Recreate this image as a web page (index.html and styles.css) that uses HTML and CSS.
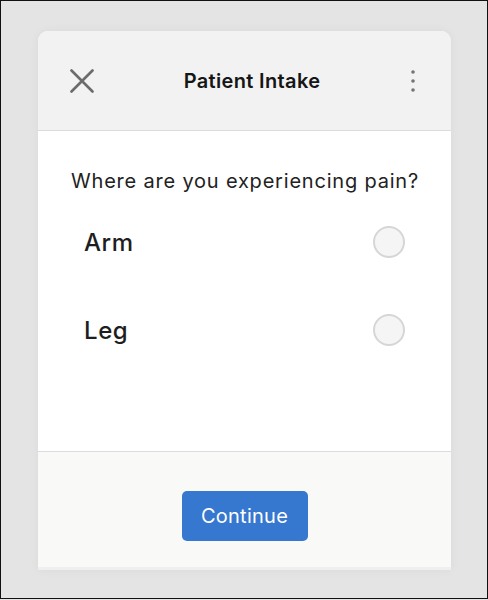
FILE: index.html
```html
<!DOCTYPE html>
<html lang="en">
<head>
    <meta charset="UTF-8">
    <meta name="viewport" content="width=device-width, initial-scale=1.0">
    <title>Patient Intake</title>
    <link rel="stylesheet" href="styles.css">
</head>
<body>

    <div class="frame">
        <div class="card">

            <!-- Header -->
            <header class="card-header">
                <button class="icon-btn close-btn" aria-label="Close">
                    <svg width="24" height="24" viewBox="0 0 24 24">
                        <path d="M1.5 1.5 L22.5 22.5 M22.5 1.5 L1.5 22.5" stroke="#6b6b6b" stroke-width="2.6" stroke-linecap="round" fill="none"/>
                    </svg>
                </button>
                <h1 class="title">Patient Intake</h1>
                <button class="icon-btn more-btn" aria-label="More">
                    <svg width="6" height="24" viewBox="0 0 6 24">
                        <circle cx="3" cy="3" r="1.8" fill="#747474"/>
                        <circle cx="3" cy="12" r="1.8" fill="#747474"/>
                        <circle cx="3" cy="21" r="1.8" fill="#747474"/>
                    </svg>
                </button>
            </header>

            <!-- Question -->
            <main class="card-body">
                <p class="question">Where are you experiencing pain?</p>
                <ul class="options">
                    <li class="option">
                        <span class="option-label">Arm</span>
                        <span class="radio"></span>
                    </li>
                    <li class="option">
                        <span class="option-label">Leg</span>
                        <span class="radio"></span>
                    </li>
                </ul>
            </main>

            <!-- Footer -->
            <footer class="card-footer">
                <button class="btn">Continue</button>
            </footer>
            <div class="card-strip"></div>

        </div>
    </div>

</body>
</html>
```

FILE: styles.css
```css
body {
    margin: 0;
    padding: 0;
    font-family: Inter, "Noto Sans", Arial, sans-serif;
    background: #e4e4e4;
}
.frame {
    box-sizing: border-box;
    width: 488px;
    height: 599px;
    border: 1px solid #111;
    background: #e4e4e4;
    padding: 30px 0 0 37px;
}
.card {
    width: 413px;
    background: #fff;
    border-radius: 10px 10px 0 0;
    box-shadow: 0 0 10px rgba(0,0,0,0.05);
    overflow: hidden;
}
.card-header {
    height: 99px;
    background: #f2f2f2;
    border-bottom: 1px solid #dcdcdc;
    display: flex;
    align-items: center;
    justify-content: space-between;
    padding: 0 35px 0 32px;
}
.icon-btn {
    background: none;
    border: none;
    padding: 0;
    display: flex;
    align-items: center;
    justify-content: center;
    cursor: pointer;
}
.close-btn {
    width: 24px;
    height: 24px;
}
.more-btn {
    width: 6px;
    height: 24px;
}
.title {
    margin: 0;
    font-size: 20px;
    font-weight: 600;
    color: #161616;
    letter-spacing: 0.35px;
}
.card-body {
    height: 320px;
    box-sizing: border-box;
    padding: 38px 0 0 33px;
}
.question {
    margin: 0;
    font-size: 20px;
    line-height: 24px;
    color: #222;
    letter-spacing: 0.8px;
}
.options {
    list-style: none;
    margin: 21px 0 0 -33px;
    padding: 0 46px;
    display: flex;
    flex-direction: column;
    gap: 32px;
}
.option {
    height: 56px;
    display: flex;
    align-items: center;
    justify-content: space-between;
}
.option-label {
    font-size: 24px;
    font-weight: 500;
    color: #1e1e1e;
    letter-spacing: 0.6px;
}
.radio {
    box-sizing: border-box;
    width: 32px;
    height: 32px;
    border-radius: 50%;
    border: 2px solid #d6d6d6;
    background: #f5f5f5;
}
.card-footer {
    background: #f9f9f7;
    border-top: 1px solid #dcdcdc;
    padding: 39px 0 26px;
    display: flex;
    justify-content: center;
}
.btn {
    width: 126px;
    height: 50px;
    background: #3677cf;
    color: #fff;
    border: none;
    border-radius: 5px;
    font-family: inherit;
    font-size: 20px;
    letter-spacing: 0.25px;
    cursor: pointer;
}
.card-strip {
    height: 3px;
    background: #efefef;
}
```
